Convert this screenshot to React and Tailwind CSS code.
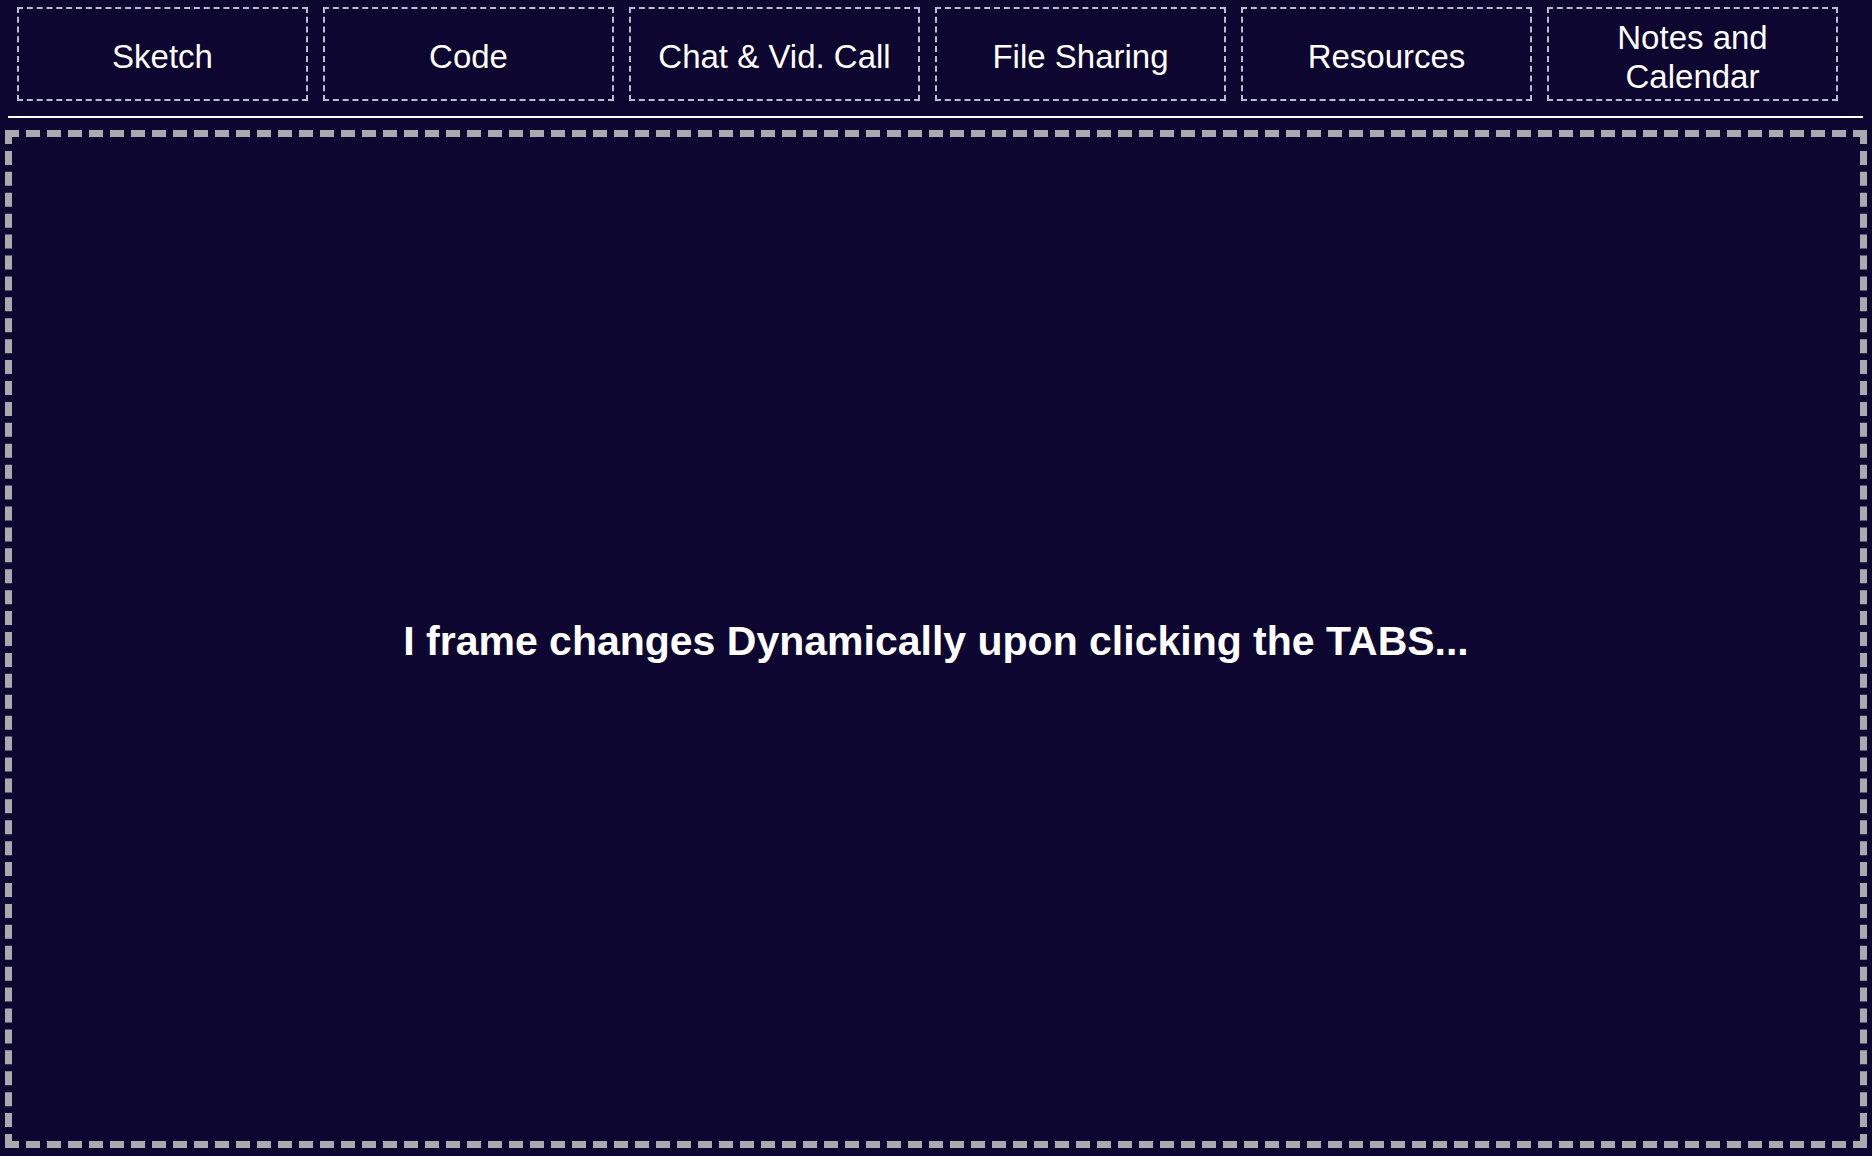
const tabs = ['Sketch', 'Code', 'Chat & Vid. Call', 'File Sharing', 'Resources', 'Notes and Calendar'];

export default function App() {
  return (
    <div className="w-full h-[1156px] overflow-hidden bg-[#0d0631] text-white font-['Liberation_Sans',Arial,sans-serif]">
      {/* Tabs */}
      <div className="flex gap-[15px] pl-[17px] pt-[7px]">
        {tabs.map((t) => (
          <button
            key={t}
            className="w-[291px] h-[94px] border-2 border-dashed border-[#bdbbd3] flex items-center justify-center text-center text-[33px] leading-[39px] px-[20px] pt-[5px] text-white"
          >
            {t}
          </button>
        ))}
      </div>

      <div className="mt-[15px] ml-[8px] w-[1855px] h-[2px] bg-white" />

      {/* Frame */}
      <div className="mt-[12px] ml-[5px] w-[1862px] h-[1018px] border-[7px] border-dashed border-[#aaaaae] flex items-center justify-center pt-[6px]">
        <p className="text-[41px] font-bold">I frame changes Dynamically upon clicking the TABS...</p>
      </div>
    </div>
  );
}
